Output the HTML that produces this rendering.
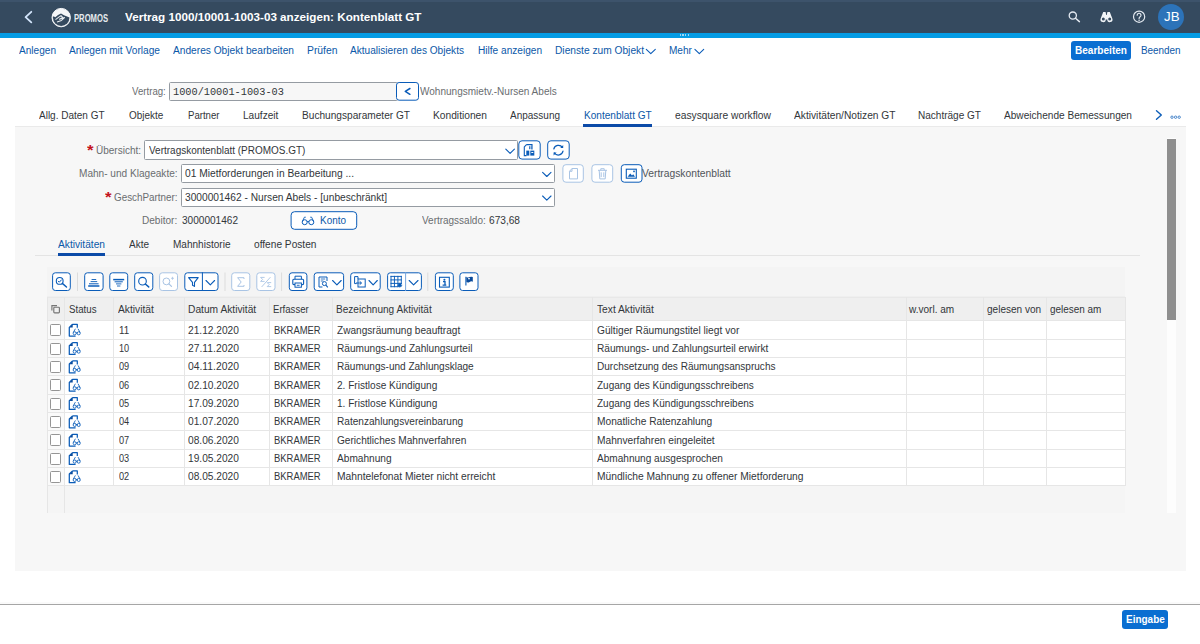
<!DOCTYPE html>
<html lang="de"><head><meta charset="utf-8"><title>Vertrag 1000/10001-1003-03 anzeigen: Kontenblatt GT</title>
<style>
*{box-sizing:border-box;margin:0;padding:0}
html,body{width:1200px;height:644px;overflow:hidden;background:#fff}
body{position:relative;font-family:"Liberation Sans",sans-serif;font-size:10px;color:#32363a}
.a{position:absolute;white-space:nowrap}
.t{transform-origin:0 0;z-index:2}
svg{position:absolute;overflow:visible}
</style></head><body>
<div class="a" style="left:0px;top:0px;width:1200px;height:33px;background:#354a5f;"></div>
<div class="a" style="left:0px;top:0px;width:1200px;height:2px;background:#3d536b;"></div>
<div class="a" style="left:0px;top:32.6px;width:1200px;height:5px;background:#069ce4;"></div>
<div class="a" style="left:679.5px;top:34.4px;width:1.3px;height:1.3px;background:#9fd6f3;"></div>
<div class="a" style="left:682.3px;top:34.4px;width:1.3px;height:1.3px;background:#9fd6f3;"></div>
<div class="a" style="left:685.1px;top:34.4px;width:1.3px;height:1.3px;background:#9fd6f3;"></div>
<div class="a" style="left:687.9px;top:34.4px;width:1.3px;height:1.3px;background:#9fd6f3;"></div>
<div class="a t" style="left:124.5px;top:10px;line-height:14px;color:#fff;transform:scaleX(1.0151);font-size:11.5px;font-weight:bold;">Vertrag 1000/10001-1003-03 anzeigen: Kontenblatt GT</div>
<div class="a t" style="left:74px;top:11px;line-height:14px;color:#e6eaee;transform:scaleX(0.7285);font-size:10.5px;font-weight:bold;">PROMOS</div>
<div class="a" style="left:1158px;top:4px;width:26px;height:26px;background:#2c73b9;border-radius:13px;"></div>
<div class="a t" style="left:1163.5px;top:9px;line-height:16px;color:#fff;transform:scaleX(1.1059);font-size:12px;">JB</div>
<div class="a t" style="left:19px;top:44px;line-height:13px;color:#0b58a8;transform:scaleX(1.0081);">Anlegen</div>
<div class="a t" style="left:69px;top:44px;line-height:13px;color:#0b58a8;transform:scaleX(1.0166);">Anlegen mit Vorlage</div>
<div class="a t" style="left:173px;top:44px;line-height:13px;color:#0b58a8;transform:scaleX(1.0171);">Anderes Objekt bearbeiten</div>
<div class="a t" style="left:307px;top:44px;line-height:13px;color:#0b58a8;transform:scaleX(1.0350);">Prüfen</div>
<div class="a t" style="left:350px;top:44px;line-height:13px;color:#0b58a8;transform:scaleX(1.0102);">Aktualisieren des Objekts</div>
<div class="a t" style="left:478px;top:44px;line-height:13px;color:#0b58a8;transform:scaleX(1.0099);">Hilfe anzeigen</div>
<div class="a t" style="left:555px;top:44px;line-height:13px;color:#0b58a8;transform:scaleX(1.0199);">Dienste zum Objekt</div>
<div class="a t" style="left:668.8px;top:44px;line-height:13px;color:#0b58a8;transform:scaleX(1.0045);">Mehr</div>
<div class="a" style="left:1071px;top:41px;width:60px;height:19px;background:#0a6ed1;border-radius:3px;"></div>
<div class="a t" style="left:1075px;top:44px;line-height:13px;color:#fff;transform:scaleX(1.0060);font-weight:bold;">Bearbeiten</div>
<div class="a t" style="left:1140.7px;top:44px;line-height:13px;color:#0b58a8;transform:scaleX(0.9888);">Beenden</div>
<div class="a t" style="left:131.5px;top:85px;line-height:13px;color:#6a6d70;transform:scaleX(0.9649);">Vertrag:</div>
<div class="a" style="left:169px;top:82px;width:229px;height:19px;background:#f7f7f7;border:1px solid #959ba2;border-radius:1.5px;"></div>
<div class="a t" style="left:173.3px;top:85px;line-height:14px;color:#32363a;transform:scaleX(0.9970);font-size:10.3px;font-family:'Liberation Mono',monospace;">1000/10001-1003-03</div>
<div class="a t" style="left:419.6px;top:85px;line-height:13px;color:#6a6d70;transform:scaleX(1.0024);">Wohnungsmietv.-Nursen Abels</div>
<div class="a t" style="left:39px;top:109px;line-height:13px;color:#32363a;transform:scaleX(1.0001);">Allg. Daten GT</div>
<div class="a t" style="left:128.7px;top:109px;line-height:13px;color:#32363a;transform:scaleX(0.9951);">Objekte</div>
<div class="a t" style="left:187.5px;top:109px;line-height:13px;color:#32363a;transform:scaleX(0.9605);">Partner</div>
<div class="a t" style="left:243.3px;top:109px;line-height:13px;color:#32363a;transform:scaleX(1.0105);">Laufzeit</div>
<div class="a t" style="left:302px;top:109px;line-height:13px;color:#32363a;transform:scaleX(1.0120);">Buchungsparameter GT</div>
<div class="a t" style="left:433px;top:109px;line-height:13px;color:#32363a;transform:scaleX(1.0222);">Konditionen</div>
<div class="a t" style="left:510px;top:109px;line-height:13px;color:#32363a;transform:scaleX(0.9991);">Anpassung</div>
<div class="a t" style="left:584px;top:109px;line-height:13px;color:#0b58a8;transform:scaleX(1.0065);">Kontenblatt GT</div>
<div class="a t" style="left:675px;top:109px;line-height:13px;color:#32363a;transform:scaleX(1.0281);">easysquare workflow</div>
<div class="a t" style="left:793.5px;top:109px;line-height:13px;color:#32363a;transform:scaleX(1.0203);">Aktivitäten/Notizen GT</div>
<div class="a t" style="left:918px;top:109px;line-height:13px;color:#32363a;transform:scaleX(1.0030);">Nachträge GT</div>
<div class="a t" style="left:1004px;top:109px;line-height:13px;color:#32363a;transform:scaleX(1.0097);">Abweichende Bemessungen</div>
<div class="a" style="left:15px;top:126px;width:1170.5px;height:445px;background:#f7f7f7;"></div>
<div class="a" style="left:15px;top:125.8px;width:1170.5px;height:1px;background:#eaeaea;"></div>
<div class="a" style="left:583.2px;top:124.3px;width:69px;height:2.3px;background:#0c4ba8;"></div>
<div class="a" style="left:1166.6px;top:138px;width:9.3px;height:375px;background:#fdfdfd;"></div>
<div class="a" style="left:1167px;top:138.8px;width:8.5px;height:181px;background:#8f8f8f;"></div>
<div class="a t" style="left:86.8px;top:141px;line-height:18px;color:#c4141c;transform:scaleX(1.2000);font-size:14px;font-weight:bold;">*</div>
<div class="a t" style="left:96px;top:144px;line-height:13px;color:#6a6d70;transform:scaleX(0.9997);">Übersicht:</div>
<div class="a" style="left:144px;top:140px;width:374px;height:20px;background:#fff;border:1px solid #959ba2;border-radius:1.5px;"></div>
<div class="a t" style="left:148.6px;top:144px;line-height:13px;color:#32363a;transform:scaleX(0.9980);">Vertragskontenblatt (PROMOS.GT)</div>
<div class="a t" style="left:79px;top:167px;line-height:13px;color:#6a6d70;transform:scaleX(1.0077);">Mahn- und Klageakte:</div>
<div class="a" style="left:181px;top:164px;width:374px;height:19px;background:#fff;border:1px solid #959ba2;border-radius:1.5px;"></div>
<div class="a t" style="left:185px;top:167px;line-height:13px;color:#32363a;transform:scaleX(1.0236);">01 Mietforderungen in Bearbeitung ...</div>
<div class="a t" style="left:642.3px;top:167px;line-height:13px;color:#51555a;transform:scaleX(1.0293);">Vertragskontenblatt</div>
<div class="a t" style="left:104.8px;top:188px;line-height:18px;color:#c4141c;transform:scaleX(1.2000);font-size:14px;font-weight:bold;">*</div>
<div class="a t" style="left:114px;top:191px;line-height:13px;color:#6a6d70;transform:scaleX(0.9863);">GeschPartner:</div>
<div class="a" style="left:181px;top:188px;width:374px;height:19px;background:#fff;border:1px solid #959ba2;border-radius:1.5px;"></div>
<div class="a t" style="left:185px;top:191px;line-height:13px;color:#32363a;transform:scaleX(1.0178);">3000001462 - Nursen Abels - [unbeschränkt]</div>
<div class="a t" style="left:142.4px;top:214px;line-height:13px;color:#6a6d70;transform:scaleX(1.0053);">Debitor:</div>
<div class="a t" style="left:181.6px;top:214px;line-height:13px;color:#32363a;transform:scaleX(1.0067);">3000001462</div>
<div class="a t" style="left:319.8px;top:214px;line-height:13px;color:#0b58a8;transform:scaleX(0.9946);">Konto</div>
<div class="a t" style="left:422.3px;top:214px;line-height:13px;color:#6a6d70;transform:scaleX(0.9963);">Vertragssaldo:</div>
<div class="a t" style="left:489.3px;top:214px;line-height:13px;color:#32363a;transform:scaleX(1.0133);">673,68</div>
<div class="a t" style="left:58px;top:238px;line-height:13px;color:#0b58a8;transform:scaleX(1.0186);">Aktivitäten</div>
<div class="a t" style="left:128.8px;top:238px;line-height:13px;color:#32363a;transform:scaleX(0.9992);">Akte</div>
<div class="a t" style="left:172.5px;top:238px;line-height:13px;color:#32363a;transform:scaleX(1.0041);">Mahnhistorie</div>
<div class="a t" style="left:253.8px;top:238px;line-height:13px;color:#32363a;transform:scaleX(1.0155);">offene Posten</div>
<div class="a" style="left:35px;top:255px;width:1105px;height:1px;background:#e4e4e4;"></div>
<div class="a" style="left:57.5px;top:253.4px;width:47.3px;height:2.2px;background:#0c4ba8;"></div>
<div class="a" style="left:47px;top:267px;width:1078px;height:30px;background:#f4f4f4;"></div>
<div class="a" style="left:47px;top:486px;width:1078px;height:27px;background:#f5f5f5;"></div>
<div class="a" style="left:0px;top:602px;width:1200px;height:2px;background:#fafafa;"></div>
<div class="a" style="left:0px;top:604px;width:1200px;height:1.2px;background:#a6a6a6;"></div>
<div class="a" style="left:1122.3px;top:610px;width:46px;height:18.8px;background:#0a6ed1;border-radius:3px;"></div>
<div class="a t" style="left:1126px;top:613px;line-height:13px;color:#fff;transform:scaleX(0.9973);font-weight:bold;">Eingabe</div>
<div class="a" style="left:47px;top:296px;width:1078px;height:24.80000000000001px;background:#efefef;"></div>
<div class="a" style="left:65px;top:320.8px;width:1060px;height:164.96999999999997px;background:#fff;"></div>
<div class="a" style="left:47px;top:320.8px;width:18px;height:164.96999999999997px;background:#fafafa;"></div>
<div class="a" style="left:47px;top:297px;width:1078px;height:1px;background:#e8e8e8;"></div>
<div class="a" style="left:47px;top:320.30px;width:1078px;height:1px;background:#e6e6e6"></div>
<div class="a" style="left:47px;top:338.63px;width:1078px;height:1px;background:#e6e6e6"></div>
<div class="a" style="left:47px;top:356.96px;width:1078px;height:1px;background:#e6e6e6"></div>
<div class="a" style="left:47px;top:375.29px;width:1078px;height:1px;background:#e6e6e6"></div>
<div class="a" style="left:47px;top:393.62px;width:1078px;height:1px;background:#e6e6e6"></div>
<div class="a" style="left:47px;top:411.95px;width:1078px;height:1px;background:#e6e6e6"></div>
<div class="a" style="left:47px;top:430.28px;width:1078px;height:1px;background:#e6e6e6"></div>
<div class="a" style="left:47px;top:448.61px;width:1078px;height:1px;background:#e6e6e6"></div>
<div class="a" style="left:47px;top:466.94px;width:1078px;height:1px;background:#e6e6e6"></div>
<div class="a" style="left:47px;top:485.27px;width:1078px;height:1px;background:#e6e6e6"></div>
<div class="a" style="left:64.0px;top:297px;width:1px;height:188.77px;background:#e6e6e6"></div>
<div class="a" style="left:113.0px;top:297px;width:1px;height:188.77px;background:#e6e6e6"></div>
<div class="a" style="left:184.0px;top:297px;width:1px;height:188.77px;background:#e6e6e6"></div>
<div class="a" style="left:269.0px;top:297px;width:1px;height:188.77px;background:#e6e6e6"></div>
<div class="a" style="left:332.0px;top:297px;width:1px;height:188.77px;background:#e6e6e6"></div>
<div class="a" style="left:592.0px;top:297px;width:1px;height:188.77px;background:#e6e6e6"></div>
<div class="a" style="left:905.5px;top:297px;width:1px;height:188.77px;background:#e6e6e6"></div>
<div class="a" style="left:983.0px;top:297px;width:1px;height:188.77px;background:#e6e6e6"></div>
<div class="a" style="left:1046.2px;top:297px;width:1px;height:188.77px;background:#e6e6e6"></div>
<div class="a" style="left:46.5px;top:297px;width:1px;height:216px;background:#e6e6e6"></div>
<div class="a" style="left:64px;top:297px;width:1px;height:216px;background:#e6e6e6"></div>
<div class="a" style="left:1124.5px;top:297px;width:1px;height:188.77px;background:#e6e6e6"></div>
<div class="a t" style="left:69.2px;top:303px;line-height:13px;color:#32363a;transform:scaleX(0.9697);">Status</div>
<div class="a t" style="left:117.5px;top:303px;line-height:13px;color:#32363a;transform:scaleX(1.0224);">Aktivität</div>
<div class="a t" style="left:188px;top:303px;line-height:13px;color:#32363a;transform:scaleX(1.0224);">Datum Aktivität</div>
<div class="a t" style="left:273px;top:303px;line-height:13px;color:#32363a;transform:scaleX(0.9588);">Erfasser</div>
<div class="a t" style="left:336.3px;top:303px;line-height:13px;color:#32363a;transform:scaleX(1.0067);">Bezeichnung Aktivität</div>
<div class="a t" style="left:597px;top:303px;line-height:13px;color:#32363a;transform:scaleX(1.0220);">Text Aktivität</div>
<div class="a t" style="left:908.8px;top:303px;line-height:13px;color:#32363a;transform:scaleX(1.0041);">w.vorl. am</div>
<div class="a t" style="left:986.7px;top:303px;line-height:13px;color:#32363a;transform:scaleX(1.0030);">gelesen von</div>
<div class="a t" style="left:1049.9px;top:303px;line-height:13px;color:#32363a;transform:scaleX(0.9941);">gelesen am</div>
<div class="a t" style="left:119px;top:324px;line-height:13px;color:#32363a;transform:scaleX(0.9817);">11</div>
<div class="a t" style="left:188.3px;top:324px;line-height:13px;color:#32363a;transform:scaleX(1.0167);">21.12.2020</div>
<div class="a t" style="left:273.7px;top:324px;line-height:13px;color:#32363a;transform:scaleX(0.9423);">BKRAMER</div>
<div class="a t" style="left:336.6px;top:324px;line-height:13px;color:#32363a;transform:scaleX(1.0074);">Zwangsräumung beauftragt</div>
<div class="a t" style="left:597.4px;top:324px;line-height:13px;color:#32363a;transform:scaleX(1.0200);">Gültiger Räumungstitel liegt vor</div>
<div class="a" style="left:50px;top:324.40px;width:11.2px;height:12px;background:#fff;border:1.1px solid #959595;border-radius:1.5px"></div>
<div class="a t" style="left:119px;top:342px;line-height:13px;color:#32363a;transform:scaleX(0.9169);">10</div>
<div class="a t" style="left:188.3px;top:342px;line-height:13px;color:#32363a;transform:scaleX(1.0322);">27.11.2020</div>
<div class="a t" style="left:273.7px;top:342px;line-height:13px;color:#32363a;transform:scaleX(0.9423);">BKRAMER</div>
<div class="a t" style="left:336.6px;top:342px;line-height:13px;color:#32363a;transform:scaleX(1.0107);">Räumungs-und Zahlungsurteil</div>
<div class="a t" style="left:597.4px;top:342px;line-height:13px;color:#32363a;transform:scaleX(1.0138);">Räumungs- und Zahlungsurteil erwirkt</div>
<div class="a" style="left:50px;top:342.73px;width:11.2px;height:12px;background:#fff;border:1.1px solid #959595;border-radius:1.5px"></div>
<div class="a t" style="left:119px;top:360px;line-height:13px;color:#32363a;transform:scaleX(0.9169);">09</div>
<div class="a t" style="left:188.3px;top:360px;line-height:13px;color:#32363a;transform:scaleX(1.0322);">04.11.2020</div>
<div class="a t" style="left:273.7px;top:360px;line-height:13px;color:#32363a;transform:scaleX(0.9423);">BKRAMER</div>
<div class="a t" style="left:336.6px;top:360px;line-height:13px;color:#32363a;transform:scaleX(1.0036);">Räumungs-und Zahlungsklage</div>
<div class="a t" style="left:597.4px;top:360px;line-height:13px;color:#32363a;transform:scaleX(1.0034);">Durchsetzung des Räumungsanspruchs</div>
<div class="a" style="left:50px;top:361.06px;width:11.2px;height:12px;background:#fff;border:1.1px solid #959595;border-radius:1.5px"></div>
<div class="a t" style="left:119px;top:379px;line-height:13px;color:#32363a;transform:scaleX(0.9169);">06</div>
<div class="a t" style="left:188.3px;top:379px;line-height:13px;color:#32363a;transform:scaleX(1.0167);">02.10.2020</div>
<div class="a t" style="left:273.7px;top:379px;line-height:13px;color:#32363a;transform:scaleX(0.9423);">BKRAMER</div>
<div class="a t" style="left:336.6px;top:379px;line-height:13px;color:#32363a;transform:scaleX(1.0079);">2. Fristlose Kündigung</div>
<div class="a t" style="left:597.4px;top:379px;line-height:13px;color:#32363a;transform:scaleX(1.0001);">Zugang des Kündigungsschreibens</div>
<div class="a" style="left:50px;top:379.39px;width:11.2px;height:12px;background:#fff;border:1.1px solid #959595;border-radius:1.5px"></div>
<div class="a t" style="left:119px;top:397px;line-height:13px;color:#32363a;transform:scaleX(0.9169);">05</div>
<div class="a t" style="left:188.3px;top:397px;line-height:13px;color:#32363a;transform:scaleX(1.0167);">17.09.2020</div>
<div class="a t" style="left:273.7px;top:397px;line-height:13px;color:#32363a;transform:scaleX(0.9423);">BKRAMER</div>
<div class="a t" style="left:336.6px;top:397px;line-height:13px;color:#32363a;transform:scaleX(1.0079);">1. Fristlose Kündigung</div>
<div class="a t" style="left:597.4px;top:397px;line-height:13px;color:#32363a;transform:scaleX(1.0001);">Zugang des Kündigungsschreibens</div>
<div class="a" style="left:50px;top:397.72px;width:11.2px;height:12px;background:#fff;border:1.1px solid #959595;border-radius:1.5px"></div>
<div class="a t" style="left:119px;top:415px;line-height:13px;color:#32363a;transform:scaleX(0.9169);">04</div>
<div class="a t" style="left:188.3px;top:415px;line-height:13px;color:#32363a;transform:scaleX(1.0167);">01.07.2020</div>
<div class="a t" style="left:273.7px;top:415px;line-height:13px;color:#32363a;transform:scaleX(0.9423);">BKRAMER</div>
<div class="a t" style="left:336.6px;top:415px;line-height:13px;color:#32363a;transform:scaleX(1.0080);">Ratenzahlungsvereinbarung</div>
<div class="a t" style="left:597.4px;top:415px;line-height:13px;color:#32363a;transform:scaleX(1.0199);">Monatliche Ratenzahlung</div>
<div class="a" style="left:50px;top:416.05px;width:11.2px;height:12px;background:#fff;border:1.1px solid #959595;border-radius:1.5px"></div>
<div class="a t" style="left:119px;top:434px;line-height:13px;color:#32363a;transform:scaleX(0.9169);">07</div>
<div class="a t" style="left:188.3px;top:434px;line-height:13px;color:#32363a;transform:scaleX(1.0167);">08.06.2020</div>
<div class="a t" style="left:273.7px;top:434px;line-height:13px;color:#32363a;transform:scaleX(0.9423);">BKRAMER</div>
<div class="a t" style="left:336.6px;top:434px;line-height:13px;color:#32363a;transform:scaleX(1.0114);">Gerichtliches Mahnverfahren</div>
<div class="a t" style="left:597.4px;top:434px;line-height:13px;color:#32363a;transform:scaleX(1.0178);">Mahnverfahren eingeleitet</div>
<div class="a" style="left:50px;top:434.38px;width:11.2px;height:12px;background:#fff;border:1.1px solid #959595;border-radius:1.5px"></div>
<div class="a t" style="left:119px;top:452px;line-height:13px;color:#32363a;transform:scaleX(0.9169);">03</div>
<div class="a t" style="left:188.3px;top:452px;line-height:13px;color:#32363a;transform:scaleX(1.0167);">19.05.2020</div>
<div class="a t" style="left:273.7px;top:452px;line-height:13px;color:#32363a;transform:scaleX(0.9423);">BKRAMER</div>
<div class="a t" style="left:336.6px;top:452px;line-height:13px;color:#32363a;transform:scaleX(1.0123);">Abmahnung</div>
<div class="a t" style="left:597.4px;top:452px;line-height:13px;color:#32363a;transform:scaleX(1.0064);">Abmahnung ausgesprochen</div>
<div class="a" style="left:50px;top:452.71px;width:11.2px;height:12px;background:#fff;border:1.1px solid #959595;border-radius:1.5px"></div>
<div class="a t" style="left:119px;top:470px;line-height:13px;color:#32363a;transform:scaleX(0.9169);">02</div>
<div class="a t" style="left:188.3px;top:470px;line-height:13px;color:#32363a;transform:scaleX(1.0167);">08.05.2020</div>
<div class="a t" style="left:273.7px;top:470px;line-height:13px;color:#32363a;transform:scaleX(0.9423);">BKRAMER</div>
<div class="a t" style="left:336.6px;top:470px;line-height:13px;color:#32363a;transform:scaleX(1.0281);">Mahntelefonat Mieter nicht erreicht</div>
<div class="a t" style="left:597.4px;top:470px;line-height:13px;color:#32363a;transform:scaleX(1.0243);">Mündliche Mahnung zu offener Mietforderung</div>
<div class="a" style="left:50px;top:471.04px;width:11.2px;height:12px;background:#fff;border:1.1px solid #959595;border-radius:1.5px"></div>
<svg width="1200" height="644" viewBox="0 0 1200 644" style="left:0;top:0"><path d="M31.3 11.8 L25.6 17.1 L31.3 22.4" fill="none" stroke="#d3e5fb" stroke-width="1.8" stroke-linecap="round" stroke-linejoin="round"/>
<circle cx="61.2" cy="17.6" r="9.2" fill="#f4f6f8" stroke="#f4f6f8" stroke-width="1"/>
<clipPath id="lc"><circle cx="61.2" cy="17.6" r="8.3"/></clipPath>
<path clip-path="url(#lc)" d="M50 18.5 L53.5 16.3 L55.3 17.2 L58 15 L61 13.6 L64 15.2 L66.5 16.2 L69.5 17.5 L72 19 L72 30 L50 30 Z" fill="#354a5f"/>
<path clip-path="url(#lc)" d="M55.5 19.6 L58.8 17.2 L61 15.6 L62.6 17.4 L59.5 19.2 L64.5 17.6 L61.5 20.4 L57 22" fill="none" stroke="#e6ebef" stroke-width="1.05" stroke-linejoin="round"/>
<circle cx="1072.8" cy="15.6" r="3.6" fill="none" stroke="#e3e9f0" stroke-width="1.3"/><path d="M1075.5 18.3 L1079.4 21.6" stroke="#e3e9f0" stroke-width="1.5" stroke-linecap="round"/>
<path d="M1103.2 12 h2.4 l0.6 3 h0.6 l0.6 -3 h2.4 l2.6 6.8 a2.6 2.6 0 1 1 -5.1 0.6 h-1.6 a2.6 2.6 0 1 1 -5.1 -0.6 Z" fill="#f2f5f8"/>
<circle cx="1103.3" cy="18.9" r="1.5" fill="#354a5f"/><circle cx="1109.7" cy="18.9" r="1.5" fill="#354a5f"/>
<circle cx="1139.1" cy="16.7" r="5.6" fill="none" stroke="#e3e9f0" stroke-width="1.2"/>
<path d="M1137.2 15.2 a1.9 1.9 0 1 1 2.9 1.6 q-1 0.6 -1 1.6" fill="none" stroke="#e3e9f0" stroke-width="1.2" stroke-linecap="round"/><circle cx="1139.1" cy="20.2" r="0.8" fill="#e3e9f0"/>
<path d="M646.3 49.4 L650.8 53.6 L655.3 49.4" fill="none" stroke="#0a5cb8" stroke-width="1.1" stroke-linecap="round" stroke-linejoin="round"/>
<path d="M694.9 49.4 L699.3 53.6 L703.7 49.4" fill="none" stroke="#0a5cb8" stroke-width="1.1" stroke-linecap="round" stroke-linejoin="round"/>
<path d="M1156.5 110.8 L1161.3 115 L1156.5 119.2" fill="none" stroke="#0a5cb8" stroke-width="1.4" stroke-linecap="round" stroke-linejoin="round"/>
<circle cx="1172" cy="117.2" r="1.2" fill="none" stroke="#0a5cb8" stroke-width="0.7"/>
<circle cx="1175.6" cy="117.2" r="1.2" fill="none" stroke="#0a5cb8" stroke-width="0.7"/>
<circle cx="1179.2" cy="117.2" r="1.2" fill="none" stroke="#0a5cb8" stroke-width="0.7"/>
<rect x="396.5" y="82.5" width="22" height="17.7" rx="2.6" fill="#fff" stroke="#0a5cb8" stroke-width="1"/>
<path d="M409.9 88.5 L405.3 91.4 L409.9 94.3" fill="none" stroke="#0a5cb8" stroke-width="1.5" stroke-linecap="round" stroke-linejoin="round"/>
<path d="M505.8 149.2 L510.1 153.4 L514.4 149.2" fill="none" stroke="#0a5cb8" stroke-width="1.1" stroke-linecap="round" stroke-linejoin="round"/>
<path d="M542.6 172.3 L546.8 176.5 L551 172.3" fill="none" stroke="#0a5cb8" stroke-width="1.1" stroke-linecap="round" stroke-linejoin="round"/>
<path d="M542.6 196 L546.8 200.2 L551 196" fill="none" stroke="#0a5cb8" stroke-width="1.1" stroke-linecap="round" stroke-linejoin="round"/>
<rect x="518.8" y="140.8" width="21.4" height="18.3" rx="3.2" fill="#fff" stroke="#0a5cb8" stroke-width="1"/>
<rect x="547.7" y="140.8" width="21.5" height="18.3" rx="3.2" fill="#fff" stroke="#0a5cb8" stroke-width="1"/>
<rect x="562.9" y="164.7" width="20.4" height="17.5" rx="3" fill="#fff" stroke="#a9c4e4" stroke-width="1"/>
<rect x="591.9" y="164.7" width="20.8" height="17.5" rx="3" fill="#fff" stroke="#a9c4e4" stroke-width="1"/>
<rect x="621.3" y="164.7" width="20.7" height="17.5" rx="3" fill="#fff" stroke="#0a5cb8" stroke-width="1"/>
<path d="M526.5 144.6 h5.5 v5 M526.5 144.6 l-2.2 2.4 v8.6 h2.2" fill="none" stroke="#0a5cb8" stroke-width="1.1"/>
<rect x="526.3" y="150.6" width="3" height="5" fill="#0a5cb8"/><rect x="530.3" y="150.6" width="4" height="5" fill="#0a5cb8"/><rect x="531.3" y="152" width="2" height="1" fill="#fff"/>
<path d="M529.5 146.2 v3 M531 146.2 v3" stroke="#0a5cb8" stroke-width="0.8"/>
<path d="M553.8 149 a4.8 4.8 0 0 1 8.6 -1.6 M563 151.2 a4.8 4.8 0 0 1 -8.6 1.8" fill="none" stroke="#0a5cb8" stroke-width="1.2" stroke-linecap="round"/>
<path d="M563.2 145 v3 h-3 Z M553.6 155.4 v-3 h3 Z" fill="#0a5cb8"/>
<path d="M572 168.5 h5.5 v10.4 h-8 v-7.6 Z M572 168.5 v2.8 h-2.5" fill="none" stroke="#a9c4e4" stroke-width="1"/>
<path d="M598 170.3 h9 M600.8 170.3 v-1.6 h3.4 v1.6 M599.2 170.3 l0.6 8.6 h5.4 l0.6 -8.6 M601.2 172.3 v4.8 M603.8 172.3 v4.8" fill="none" stroke="#a9c4e4" stroke-width="1"/>
<rect x="626.3" y="169.2" width="10" height="9" fill="none" stroke="#0a5cb8" stroke-width="1.1"/>
<path d="M627.6 176.8 l2.6 -3.4 l1.8 2 l1.2 -1.2 l1.8 2.6 Z" fill="#0a5cb8"/><rect x="633.2" y="170.6" width="1.6" height="1.6" fill="#0a5cb8"/>
<rect x="291.1" y="211.7" width="65.6" height="17.6" rx="3.5" fill="#fff" stroke="#0a5cb8" stroke-width="1"/>
<circle cx="304.7" cy="222.2" r="2.5" fill="none" stroke="#0a5cb8" stroke-width="1"/><circle cx="311.3" cy="222.2" r="2.5" fill="none" stroke="#0a5cb8" stroke-width="1"/>
<path d="M302.6 221 l1.8 -3.8 h1 M313.4 221 l-1.8 -3.8 h-1 M307.2 221.6 q0.8 -0.8 1.6 0" fill="none" stroke="#0a5cb8" stroke-width="0.9" stroke-linecap="round"/>
<rect x="52.6" y="272.8" width="17.699999999999996" height="17.7" rx="2.7" fill="#fff" stroke="#0a5cb8" stroke-width="1"/>
<rect x="77.0" y="272.5" width="1" height="18.5" fill="#dcdcdc"/>
<rect x="84.7" y="272.8" width="18.39999999999999" height="17.7" rx="2.7" fill="#fff" stroke="#0a5cb8" stroke-width="1"/>
<rect x="109.8" y="272.8" width="17.89999999999999" height="17.7" rx="2.7" fill="#fff" stroke="#0a5cb8" stroke-width="1"/>
<rect x="134.7" y="272.8" width="18.100000000000023" height="17.7" rx="2.7" fill="#fff" stroke="#0a5cb8" stroke-width="1"/>
<rect x="159.6" y="272.8" width="17.900000000000006" height="17.7" rx="2.7" fill="#fff" stroke="#a9c4e4" stroke-width="1"/>
<rect x="184.8" y="272.8" width="33.19999999999999" height="17.7" rx="2.7" fill="#fff" stroke="#0a5cb8" stroke-width="1"/>
<rect x="201.9" y="272.3" width="1" height="18.7" fill="#0a5cb8"/>
<rect x="224.5" y="272.5" width="1" height="18.5" fill="#dcdcdc"/>
<rect x="231.7" y="272.8" width="18.100000000000023" height="17.7" rx="2.7" fill="#fff" stroke="#a9c4e4" stroke-width="1"/>
<rect x="256.8" y="272.8" width="18.19999999999999" height="17.7" rx="2.7" fill="#fff" stroke="#a9c4e4" stroke-width="1"/>
<rect x="281.1" y="272.5" width="1" height="18.5" fill="#dcdcdc"/>
<rect x="289.3" y="272.8" width="17.599999999999966" height="17.7" rx="2.7" fill="#fff" stroke="#0a5cb8" stroke-width="1"/>
<rect x="314.2" y="272.8" width="29.400000000000034" height="17.7" rx="2.7" fill="#fff" stroke="#0a5cb8" stroke-width="1"/>
<rect x="350.7" y="272.8" width="29.5" height="17.7" rx="2.7" fill="#fff" stroke="#0a5cb8" stroke-width="1"/>
<rect x="387.6" y="272.8" width="33.799999999999955" height="17.7" rx="2.7" fill="#fff" stroke="#0a5cb8" stroke-width="1"/>
<rect x="405.1" y="272.3" width="1" height="18.7" fill="#7ba7dc"/>
<rect x="427.3" y="272.5" width="1" height="18.5" fill="#dcdcdc"/>
<rect x="435.4" y="272.8" width="17.900000000000034" height="17.7" rx="2.7" fill="#fff" stroke="#0a5cb8" stroke-width="1"/>
<rect x="459.9" y="272.8" width="18.100000000000023" height="17.7" rx="2.7" fill="#fff" stroke="#0a5cb8" stroke-width="1"/>
<circle cx="59.7" cy="280.9" r="3.4" fill="none" stroke="#0a5cb8" stroke-width="1.1"/><path d="M62.3 283.4 L66.5 287" stroke="#0a5cb8" stroke-width="1.4" stroke-linecap="round"/><path d="M58 280.9 l1.3 1.3 l2.4 -2.6" fill="none" stroke="#0a5cb8" stroke-width="1"/>
<path d="M91.6 279.5 H96.2" stroke="#0a5cb8" stroke-width="0.9"/>
<path d="M90.6 281.6 H97.2" stroke="#0a5cb8" stroke-width="0.9"/>
<path d="M89 283.8 H98.6" stroke="#0a5cb8" stroke-width="1"/>
<path d="M88.2 286 H99.4" stroke="#0a5cb8" stroke-width="1.5"/>
<path d="M113.2 279.6 H124.2" stroke="#0a5cb8" stroke-width="1.5"/>
<path d="M114.6 281.8 H122.8" stroke="#0a5cb8" stroke-width="1"/>
<path d="M116 283.9 H121.4" stroke="#0a5cb8" stroke-width="0.9"/>
<path d="M117 286 H120.4" stroke="#0a5cb8" stroke-width="0.9"/>
<circle cx="142.5" cy="281.2" r="3.8" fill="none" stroke="#0a5cb8" stroke-width="1.1"/><path d="M145.3 284 L148.7 286.9" stroke="#0a5cb8" stroke-width="1.5" stroke-linecap="round"/>
<circle cx="166.4" cy="281.4" r="3.4" fill="none" stroke="#a9c4e4" stroke-width="1"/><path d="M168.9 283.9 L171.5 286.4" stroke="#a9c4e4" stroke-width="1.3" stroke-linecap="round"/><path d="M171 278.3 h3 M172.5 276.8 v3" stroke="#a9c4e4" stroke-width="0.8"/>
<path d="M188.6 277.6 H198.2 L194.5 282.4 V286.4 L192.5 285.2 V282.4 Z" fill="none" stroke="#0a5cb8" stroke-width="1.1" stroke-linejoin="round"/>
<path d="M206 280.5 L210.3 284.8 L214.6 280.5" fill="none" stroke="#0a5cb8" stroke-width="1.1" stroke-linecap="round" stroke-linejoin="round"/>
<path d="M244 279 V277.7 H237.6 L241.2 282 L237.6 286.3 H244 V285" fill="none" stroke="#a9c4e4" stroke-width="1"/>
<path d="M264.6 277.4 h-4 l2 2 l-2 2 h4 M271.2 282.6 h-4 l2 2 l-2 2 h4 M270.4 277.2 L261.6 287" fill="none" stroke="#a9c4e4" stroke-width="0.9"/>
<path d="M295 279.2 v-3 h6.4 v3" fill="none" stroke="#0a5cb8" stroke-width="1"/><rect x="292.8" y="279.2" width="10.8" height="5.4" rx="1" fill="none" stroke="#0a5cb8" stroke-width="1.1"/><rect x="295" y="283" width="6.4" height="4.2" fill="#fff" stroke="#0a5cb8" stroke-width="1"/><rect x="296.8" y="284.8" width="2.8" height="0.9" fill="#0a5cb8"/>
<path d="M327 281 v-4 h-8 v10 h3.4" fill="none" stroke="#0a5cb8" stroke-width="1"/><path d="M320.8 279 h4.4 M320.8 281 h2.6" stroke="#0a5cb8" stroke-width="0.8"/><circle cx="324.4" cy="283.6" r="2" fill="none" stroke="#0a5cb8" stroke-width="1"/><path d="M325.9 285.2 L327.8 287.3" stroke="#0a5cb8" stroke-width="1.1"/>
<path d="M332.6 280.5 L336.9 284.8 L341.2 280.5" fill="none" stroke="#0a5cb8" stroke-width="1.1" stroke-linecap="round" stroke-linejoin="round"/>
<path d="M358 279 v-2.4 h-3.4 v7 h2" fill="none" stroke="#0a5cb8" stroke-width="1"/><rect x="358" y="279" width="7.2" height="8" fill="none" stroke="#0a5cb8" stroke-width="1"/><path d="M356 283 h5.4 M359.6 281.2 l1.9 1.8 l-1.9 1.8" fill="none" stroke="#0a5cb8" stroke-width="1"/>
<path d="M369 280.5 L373.15 284.8 L377.3 280.5" fill="none" stroke="#0a5cb8" stroke-width="1.1" stroke-linecap="round" stroke-linejoin="round"/>
<path d="M391 276.4 H401.3 M391 279.9 H401.3 M391 283.4 H401.3 M391 286.7 H397.9 M391 276.4 V286.7 M394.45 276.4 V286.7 M397.9 276.4 V286.7 M401.3 276.4 V283.4" fill="none" stroke="#0a5cb8" stroke-width="0.95" stroke-linecap="square"/>
<circle cx="399.8" cy="285.2" r="1.7" fill="#0a5cb8"/><path d="M399.8 282.7 v5 M397.3 285.2 h5 M398 283.4 l3.6 3.6 M401.6 283.4 l-3.6 3.6" stroke="#0a5cb8" stroke-width="0.7"/>
<path d="M409.2 280.5 L413.6 284.8 L418 280.5" fill="none" stroke="#0a5cb8" stroke-width="1.1" stroke-linecap="round" stroke-linejoin="round"/>
<rect x="439.5" y="277.3" width="9.8" height="9.8" fill="none" stroke="#0a5cb8" stroke-width="1.1"/><circle cx="444.4" cy="279.7" r="1.05" fill="#0a5cb8"/><path d="M443 281.7 h2 v3.5 M442.6 285.2 h3.7" fill="none" stroke="#0a5cb8" stroke-width="1.3"/>
<path d="M465.9 276.8 V285.6" stroke="#0a5cb8" stroke-width="1.1"/><path d="M466.4 276.9 q1.6 1 3.2 0.2 t3.2 -0.2 v4.8 q-1.6 -0.8 -3.2 0.2 t-3.2 0.2 Z" fill="#0a4a9a"/><circle cx="469" cy="278.6" r="0.9" fill="#fff"/>
<rect x="53.8" y="307.2" width="5.6" height="5.6" rx="0.8" fill="#f0f0f0" stroke="#757575" stroke-width="1.15"/><path d="M51.9 310.6 V305.6 H57" fill="none" stroke="#757575" stroke-width="1.15"/>
<g transform="translate(0 320.80)"><path d="M72.5 3.5 H77.3 V7 M72.5 3.5 L69.3 6.6 V15.3 H75.6" fill="none" stroke="#0a5cb8" stroke-width="1.25" stroke-linejoin="round"/><path d="M69.3 6.8 L72.7 3.5 V6.8 Z" fill="#0a4a9a"/><circle cx="74.7" cy="12.5" r="1.55" fill="#fff" stroke="#0a5cb8" stroke-width="0.85"/><circle cx="78.7" cy="12.5" r="1.55" fill="#fff" stroke="#0a5cb8" stroke-width="0.85"/><path d="M73.5 11.3 l1.7 -3 M79.9 11.3 l-1.7 -3 M76.2 12.1 h1" fill="none" stroke="#0a5cb8" stroke-width="0.85" stroke-linecap="round"/></g>
<g transform="translate(0 339.13)"><path d="M72.5 3.5 H77.3 V7 M72.5 3.5 L69.3 6.6 V15.3 H75.6" fill="none" stroke="#0a5cb8" stroke-width="1.25" stroke-linejoin="round"/><path d="M69.3 6.8 L72.7 3.5 V6.8 Z" fill="#0a4a9a"/><circle cx="74.7" cy="12.5" r="1.55" fill="#fff" stroke="#0a5cb8" stroke-width="0.85"/><circle cx="78.7" cy="12.5" r="1.55" fill="#fff" stroke="#0a5cb8" stroke-width="0.85"/><path d="M73.5 11.3 l1.7 -3 M79.9 11.3 l-1.7 -3 M76.2 12.1 h1" fill="none" stroke="#0a5cb8" stroke-width="0.85" stroke-linecap="round"/></g>
<g transform="translate(0 357.46)"><path d="M72.5 3.5 H77.3 V7 M72.5 3.5 L69.3 6.6 V15.3 H75.6" fill="none" stroke="#0a5cb8" stroke-width="1.25" stroke-linejoin="round"/><path d="M69.3 6.8 L72.7 3.5 V6.8 Z" fill="#0a4a9a"/><circle cx="74.7" cy="12.5" r="1.55" fill="#fff" stroke="#0a5cb8" stroke-width="0.85"/><circle cx="78.7" cy="12.5" r="1.55" fill="#fff" stroke="#0a5cb8" stroke-width="0.85"/><path d="M73.5 11.3 l1.7 -3 M79.9 11.3 l-1.7 -3 M76.2 12.1 h1" fill="none" stroke="#0a5cb8" stroke-width="0.85" stroke-linecap="round"/></g>
<g transform="translate(0 375.79)"><path d="M72.5 3.5 H77.3 V7 M72.5 3.5 L69.3 6.6 V15.3 H75.6" fill="none" stroke="#0a5cb8" stroke-width="1.25" stroke-linejoin="round"/><path d="M69.3 6.8 L72.7 3.5 V6.8 Z" fill="#0a4a9a"/><circle cx="74.7" cy="12.5" r="1.55" fill="#fff" stroke="#0a5cb8" stroke-width="0.85"/><circle cx="78.7" cy="12.5" r="1.55" fill="#fff" stroke="#0a5cb8" stroke-width="0.85"/><path d="M73.5 11.3 l1.7 -3 M79.9 11.3 l-1.7 -3 M76.2 12.1 h1" fill="none" stroke="#0a5cb8" stroke-width="0.85" stroke-linecap="round"/></g>
<g transform="translate(0 394.12)"><path d="M72.5 3.5 H77.3 V7 M72.5 3.5 L69.3 6.6 V15.3 H75.6" fill="none" stroke="#0a5cb8" stroke-width="1.25" stroke-linejoin="round"/><path d="M69.3 6.8 L72.7 3.5 V6.8 Z" fill="#0a4a9a"/><circle cx="74.7" cy="12.5" r="1.55" fill="#fff" stroke="#0a5cb8" stroke-width="0.85"/><circle cx="78.7" cy="12.5" r="1.55" fill="#fff" stroke="#0a5cb8" stroke-width="0.85"/><path d="M73.5 11.3 l1.7 -3 M79.9 11.3 l-1.7 -3 M76.2 12.1 h1" fill="none" stroke="#0a5cb8" stroke-width="0.85" stroke-linecap="round"/></g>
<g transform="translate(0 412.45)"><path d="M72.5 3.5 H77.3 V7 M72.5 3.5 L69.3 6.6 V15.3 H75.6" fill="none" stroke="#0a5cb8" stroke-width="1.25" stroke-linejoin="round"/><path d="M69.3 6.8 L72.7 3.5 V6.8 Z" fill="#0a4a9a"/><circle cx="74.7" cy="12.5" r="1.55" fill="#fff" stroke="#0a5cb8" stroke-width="0.85"/><circle cx="78.7" cy="12.5" r="1.55" fill="#fff" stroke="#0a5cb8" stroke-width="0.85"/><path d="M73.5 11.3 l1.7 -3 M79.9 11.3 l-1.7 -3 M76.2 12.1 h1" fill="none" stroke="#0a5cb8" stroke-width="0.85" stroke-linecap="round"/></g>
<g transform="translate(0 430.78)"><path d="M72.5 3.5 H77.3 V7 M72.5 3.5 L69.3 6.6 V15.3 H75.6" fill="none" stroke="#0a5cb8" stroke-width="1.25" stroke-linejoin="round"/><path d="M69.3 6.8 L72.7 3.5 V6.8 Z" fill="#0a4a9a"/><circle cx="74.7" cy="12.5" r="1.55" fill="#fff" stroke="#0a5cb8" stroke-width="0.85"/><circle cx="78.7" cy="12.5" r="1.55" fill="#fff" stroke="#0a5cb8" stroke-width="0.85"/><path d="M73.5 11.3 l1.7 -3 M79.9 11.3 l-1.7 -3 M76.2 12.1 h1" fill="none" stroke="#0a5cb8" stroke-width="0.85" stroke-linecap="round"/></g>
<g transform="translate(0 449.11)"><path d="M72.5 3.5 H77.3 V7 M72.5 3.5 L69.3 6.6 V15.3 H75.6" fill="none" stroke="#0a5cb8" stroke-width="1.25" stroke-linejoin="round"/><path d="M69.3 6.8 L72.7 3.5 V6.8 Z" fill="#0a4a9a"/><circle cx="74.7" cy="12.5" r="1.55" fill="#fff" stroke="#0a5cb8" stroke-width="0.85"/><circle cx="78.7" cy="12.5" r="1.55" fill="#fff" stroke="#0a5cb8" stroke-width="0.85"/><path d="M73.5 11.3 l1.7 -3 M79.9 11.3 l-1.7 -3 M76.2 12.1 h1" fill="none" stroke="#0a5cb8" stroke-width="0.85" stroke-linecap="round"/></g>
<g transform="translate(0 467.44)"><path d="M72.5 3.5 H77.3 V7 M72.5 3.5 L69.3 6.6 V15.3 H75.6" fill="none" stroke="#0a5cb8" stroke-width="1.25" stroke-linejoin="round"/><path d="M69.3 6.8 L72.7 3.5 V6.8 Z" fill="#0a4a9a"/><circle cx="74.7" cy="12.5" r="1.55" fill="#fff" stroke="#0a5cb8" stroke-width="0.85"/><circle cx="78.7" cy="12.5" r="1.55" fill="#fff" stroke="#0a5cb8" stroke-width="0.85"/><path d="M73.5 11.3 l1.7 -3 M79.9 11.3 l-1.7 -3 M76.2 12.1 h1" fill="none" stroke="#0a5cb8" stroke-width="0.85" stroke-linecap="round"/></g></svg>
</body></html>
